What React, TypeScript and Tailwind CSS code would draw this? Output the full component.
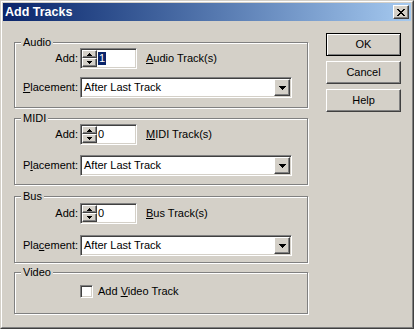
import React from "react";

const raised =
  "border border-t-white border-l-white border-r-[#404040] border-b-[#404040] shadow-[inset_-1px_-1px_0_#808080]";
const sunken =
  "border border-t-[#808080] border-l-[#808080] border-r-white border-b-white shadow-[inset_1px_1px_0_#404040,inset_-1px_-1px_0_#D4D0C8] p-px";

function Glyph({ w, h, d }: { w: number; h: number; d: string }) {
  return (
    <svg width={w} height={h} viewBox={`0 0 ${w} ${h}`} shapeRendering="crispEdges">
      <path d={d} fill="#000" />
    </svg>
  );
}

const UP = "M2 0h1v1H2z M1 1h3v1H1z M0 2h5v1H0z";
const DOWN = "M0 0h5v1H0z M1 1h3v1H1z M2 2h1v1H2z";
const COMBO = "M0 0h7v1H0z M1 1h5v1H1z M2 2h3v1H2z M3 3h1v1H3z";
const XG =
  "M0 0h2v1H0z M6 0h2v1H6z M1 1h2v1H1z M5 1h2v1H5z M2 2h4v1H2z M3 3h2v1H3z M2 4h4v1H2z M1 5h2v1H1z M5 5h2v1H5z M0 6h2v1H0z M6 6h2v1H6z";

function Spin({ value, selected }: { value: string; selected?: boolean }) {
  return (
    <div className={`${sunken} w-[57px] h-[21px] bg-white flex`}>
      <div className="w-[15px] flex flex-col bg-[#D4D0C8]">
        <div className={`${raised} h-[8px] flex items-center justify-center`}>
          <Glyph w={5} h={3} d={UP} />
        </div>
        <div className={`${raised} flex-1 flex items-center justify-center`}>
          <Glyph w={5} h={3} d={DOWN} />
        </div>
      </div>
      <div className="flex items-center ml-px">
        {selected ? (
          <span className="bg-[#0A246A] text-white leading-[13px] px-px">{value}</span>
        ) : (
          <span className="leading-[13px]">{value}</span>
        )}
      </div>
    </div>
  );
}

function Combo() {
  return (
    <div className={`${sunken} w-[212px] h-[21px] bg-white flex`}>
      <div className="flex-1 flex items-center pl-[2px]">After Last Track</div>
      <div className={`${raised} bg-[#D4D0C8] w-[16px] flex items-center justify-center`}>
        <Glyph w={7} h={4} d={COMBO} />
      </div>
    </div>
  );
}

function Group({
  title,
  h,
  mt,
  children,
}: {
  title: string;
  h: string;
  mt: string;
  children: React.ReactNode;
}) {
  return (
    <fieldset
      className={`${h} ${mt} w-[294px] m-0 p-0 min-w-0 border border-[#808080] shadow-[1px_1px_0_#fff,inset_1px_1px_0_#fff]`}
    >
      <legend className="ml-[6px] px-[2px] leading-[13px] bg-[#D4D0C8]">{title}</legend>
      {children}
    </fieldset>
  );
}

function TrackGroup({
  title,
  h,
  mt,
  spinMt,
  comboMt,
  value,
  selected,
  trackLabel,
  placement,
}: {
  title: string;
  h: string;
  mt: string;
  spinMt: string;
  comboMt: string;
  value: string;
  selected?: boolean;
  trackLabel: React.ReactNode;
  placement: React.ReactNode;
}) {
  return (
    <Group title={title} h={h} mt={mt}>
      <div className={`flex items-center h-[21px] ${spinMt}`}>
        <div className="w-[63px] text-right">Add:</div>
        <div className="ml-[2px]">
          <Spin value={value} selected={selected} />
        </div>
        <div className="ml-[9px]">{trackLabel}</div>
      </div>
      <div className={`flex items-center h-[21px] ${comboMt}`}>
        <div className="w-[63px] text-right">{placement}</div>
        <div className="ml-[2px]">
          <Combo />
        </div>
      </div>
    </Group>
  );
}

function PushButton({ label, isDefault }: { label: string; isDefault?: boolean }) {
  const cls = isDefault
    ? "border border-black shadow-[inset_1px_1px_0_#fff,inset_-1px_-1px_0_#808080]"
    : raised;
  return (
    <div className={`${cls} w-[75px] h-[23px] flex items-center justify-center`}>{label}</div>
  );
}

const U = ({ c }: { c: string }) => <span className="underline underline-offset-[1px]">{c}</span>;

export default function App() {
  return (
    <div className="w-[414px] h-[329px] bg-[#D4D0C8] border border-t-[#D4D0C8] border-l-[#D4D0C8] border-r-[#404040] border-b-[#404040] font-['Liberation_Sans',Arial,sans-serif] text-[11px] text-black">
      <div className="h-full border border-t-white border-l-white border-r-[#808080] border-b-[#808080] p-px flex flex-col">
        <div className="h-[18px] flex items-center bg-gradient-to-r from-[#0A246A] to-[#A6CAF0] pl-[2px] pr-[2px]">
          <div className="flex-1 text-white font-bold text-[12.5px] leading-none">Add Tracks</div>
          <div className={`${raised} bg-[#D4D0C8] w-[16px] h-[14px] flex items-center justify-center`}>
            <Glyph w={8} h={7} d={XG} />
          </div>
        </div>
        <div className="flex pl-[11px]">
          <div className="flex flex-col mt-[15px]">
            <TrackGroup
              title="Audio"
              h="h-[72px]"
              mt="mt-0"
              spinMt="-mt-px"
              comboMt="mt-[8px]"
              value="1"
              selected
              trackLabel={
                <>
                  <U c="A" />udio Track(s)
                </>
              }
              placement={
                <>
                  <U c="P" />lacement:
                </>
              }
            />
            <TrackGroup
              title="MIDI"
              h="h-[73px]"
              mt="mt-[4px]"
              spinMt="-mt-px"
              comboMt="mt-[10px]"
              value="0"
              trackLabel={
                <>
                  <U c="M" />IDI Track(s)
                </>
              }
              placement={
                <>
                  P<U c="l" />acement:
                </>
              }
            />
            <TrackGroup
              title="Bus"
              h="h-[73px]"
              mt="mt-[5px]"
              spinMt="mt-0"
              comboMt="mt-[11px]"
              value="0"
              trackLabel={
                <>
                  <U c="B" />us Track(s)
                </>
              }
              placement={
                <>
                  Pla<U c="c" />ement:
                </>
              }
            />
            <Group title="Video" h="h-[48px]" mt="mt-[3px]">
              <div className="flex items-center mt-[6px] ml-[65px]">
                <div className={`${sunken} w-[13px] h-[13px] bg-white`} />
                <div className="ml-[5px] leading-[13px]">
                  Add <U c="V" />ideo Track
                </div>
              </div>
            </Group>
          </div>
          <div className="flex flex-col gap-[5px] ml-[18px] mt-[12px]">
            <PushButton label="OK" isDefault />
            <PushButton label="Cancel" />
            <PushButton label="Help" />
          </div>
        </div>
      </div>
    </div>
  );
}
